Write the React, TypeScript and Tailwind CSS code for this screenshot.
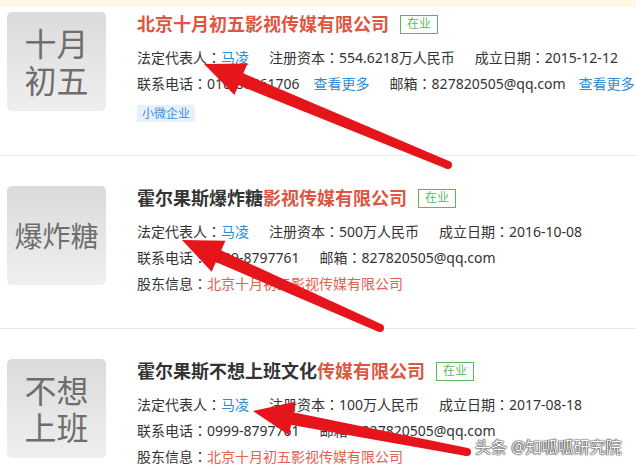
import React from 'react';

type Pt = [number, number];

const arrows: { tip: Pt; tail: Pt }[] = [
  { tip: [204, 64], tail: [448, 165] },
  { tip: [182, 240], tail: [380, 328] },
  { tip: [253, 411], tail: [467, 452] },
];

const Arrow = ({ tip, tail }: { tip: Pt; tail: Pt }) => {
  const dx = tail[0] - tip[0];
  const dy = tail[1] - tip[1];
  const len = Math.hypot(dx, dy);
  const ux = dx / len;
  const uy = dy / len;
  const nx = -uy;
  const ny = ux;
  const headLen = 40;
  const headW = 17;
  const bx = tip[0] + ux * headLen;
  const by = tip[1] + uy * headLen;
  const sx = tip[0] + ux * (headLen - 8);
  const sy = tip[1] + uy * (headLen - 8);
  const w1 = 6.5;
  const w2 = 4;
  const head = [
    [tip[0], tip[1]],
    [bx + nx * headW, by + ny * headW],
    [bx - nx * headW, by - ny * headW],
  ]
    .map((p) => p.join(','))
    .join(' ');
  const shaft = [
    [sx + nx * w1, sy + ny * w1],
    [tail[0] + nx * w2, tail[1] + ny * w2],
    [tail[0] - nx * w2, tail[1] - ny * w2],
    [sx - nx * w1, sy - ny * w1],
  ]
    .map((p) => p.join(','))
    .join(' ');
  return (
    <g fill="#e6141b">
      <polygon points={shaft} />
      <circle cx={tail[0]} cy={tail[1]} r={w2} />
      <polygon points={head} />
    </g>
  );
};

// centred full-width colon, as in the original
const Colon = () => <span className="font-['Noto_Sans_CJK_TC']">：</span>;

const Status = () => (
  <span className="ml-[11px] inline-flex h-[19px] items-center border border-[#5cb85c] px-[6px] text-[12px] leading-none text-[#5cb85c]">
    在业
  </span>
);

const Logo = ({ text, small }: { text: React.ReactNode; small?: boolean }) => (
  <div className="flex h-[99px] w-[99px] shrink-0 items-center justify-center rounded-[5px] bg-gradient-to-b from-[#dcdbdb] to-[#efefef] text-center text-[#6e6e6e]">
    <div className={small ? 'text-[28px] leading-[36px]' : 'text-[32px] leading-[37px]'}>{text}</div>
  </div>
);

const Field = ({ label, children, className = '' }: { label: string; children: React.ReactNode; className?: string }) => (
  <span className={`mr-5 whitespace-nowrap ${className}`}>
    {label}
    <Colon />
    {children}
  </span>
);

const Shareholder = () => (
  <div className="h-[26px] leading-[26px]">
    股东信息<Colon />
    <span className="text-[#e4604f]">北京十月初五影视传媒有限公司</span>
  </div>
);

export default function App() {
  return (
    <div
      className="relative h-[469px] w-[636px] overflow-hidden bg-white text-[14px] text-[#333]"
      style={{ fontFamily: '"Noto Sans", "Noto Sans CJK SC", sans-serif' }}
    >
      <div className="h-[7px] bg-[#fdf7e6]" />

      {/* card 1 */}
      <div className="flex border-b border-[#e8e8e8] pb-[33px] pl-[7px] pt-[5px]">
        <Logo
          text={
            <>
              十月
              <br />
              初五
            </>
          }
        />
        <div className="ml-[31px]">
          <div className="flex h-[24px] items-center">
            <span className="text-[18px] font-bold text-[#e0553f]">北京十月初五影视传媒有限公司</span>
            <Status />
          </div>
          <div className="mt-[8px] flex h-[26px] items-center">
            <Field label="法定代表人">
              <span className="text-[#2d8cd7]">马凌</span>
            </Field>
            <Field label="注册资本">554.6218万人民币</Field>
            <Field label="成立日期">2015-12-12</Field>
          </div>
          <div className="flex h-[26px] items-center">
            <span className="whitespace-nowrap">
              联系电话<Colon />
              010-86461706
            </span>
            <span className="ml-[14px] mr-5 text-[#2d8cd7]">查看更多</span>
            <span className="whitespace-nowrap">
              邮箱<Colon />
              827820505@qq.com
            </span>
            <span className="ml-[13px] text-[#2d8cd7]">查看更多</span>
          </div>
          <div className="mt-[9px] flex">
            <span className="bg-[#e6f1fb] px-[5px] text-[12px] leading-[17px] text-[#3c8ed6]">小微企业</span>
          </div>
        </div>
      </div>

      {/* card 2 */}
      <div className="flex border-b border-[#e8e8e8] pb-[32px] pl-[7px] pt-[30px]">
        <Logo text="爆炸糖" small />
        <div className="ml-[31px]">
          <div className="flex h-[24px] items-center">
            <span className="text-[18px] font-bold">
              霍尔果斯爆炸糖<span className="text-[#e0553f]">影视传媒有限公司</span>
            </span>
            <Status />
          </div>
          <div className="mt-[8px] flex h-[26px] items-center">
            <Field label="法定代表人">
              <span className="text-[#2d8cd7]">马凌</span>
            </Field>
            <Field label="注册资本">500万人民币</Field>
            <Field label="成立日期">2016-10-08</Field>
          </div>
          <div className="flex h-[26px] items-center">
            <Field label="联系电话">0999-8797761</Field>
            <Field label="邮箱">827820505@qq.com</Field>
          </div>
          <Shareholder />
        </div>
      </div>

      {/* card 3 */}
      <div className="flex pl-[7px] pt-[30px]">
        <Logo
          text={
            <>
              不想
              <br />
              上班
            </>
          }
        />
        <div className="ml-[31px]">
          <div className="flex h-[24px] items-center">
            <span className="text-[18px] font-bold">
              霍尔果斯不想上班文化<span className="text-[#e0553f]">传媒有限公司</span>
            </span>
            <Status />
          </div>
          <div className="mt-[8px] flex h-[26px] items-center">
            <Field label="法定代表人">
              <span className="text-[#2d8cd7]">马凌</span>
            </Field>
            <Field label="注册资本">100万人民币</Field>
            <Field label="成立日期">2017-08-18</Field>
          </div>
          <div className="flex h-[26px] items-center">
            <Field label="联系电话">0999-8797761</Field>
            <Field label="邮箱">827820505@qq.com</Field>
          </div>
          <Shareholder />
        </div>
      </div>

      <svg className="pointer-events-none absolute left-0 top-0" width="636" height="469">
        {arrows.map((a, i) => (
          <Arrow key={i} tip={a.tip} tail={a.tail} />
        ))}
      </svg>

      <div className="absolute left-[475px] top-[436px] text-[16px] leading-[22px] text-white [text-shadow:0_0_1px_#222,0_0_1px_#222,0_0_2px_#444]">
        头条 @知呱呱研究院
      </div>
    </div>
  );
}
